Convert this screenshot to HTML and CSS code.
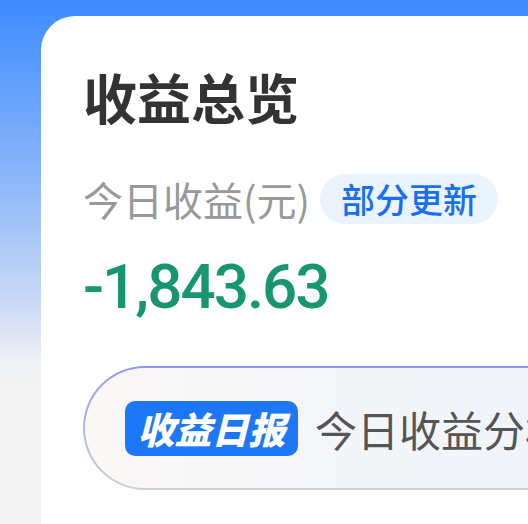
FILE: index.html
```html
<!DOCTYPE html>
<html lang="zh-CN">
<head>
<meta charset="utf-8">
<link rel="stylesheet" href="styles.css">
</head>
<body>
<div class="page">
  <div class="card">
    <h1 class="title">收益总览</h1>
    <div class="label-row">
      <span class="label">今日收益(元)</span>
      <span class="tag">部分更新</span>
    </div>
    <div class="amount">-1,843.63</div>
    <div class="banner">
      <span class="badge">收益日报</span>
      <span class="banner-text">今日收益分析已生成</span>
    </div>
  </div>
</div>
</body>
</html>
```
FILE: styles.css
```css
html, body {
  margin: 0;
  padding: 0;
  width: 528px;
  height: 524px;
  overflow: hidden;
}
body {
  background: linear-gradient(to bottom, #3d8bff 0px, #8cb7fa 180px, #c8d9f6 300px, #eef0f5 360px, #f4f4f4 390px, #f4f4f4 100%);
  font-family: "Noto Sans CJK SC", "Noto Sans", sans-serif;
}
.page {
  padding: 16px 0 0 41px;
  height: 508px;
}
.card {
  background: #fff;
  border-top-left-radius: 34px;
  height: 100%;
  padding: 46px 0 0 42px;
  box-sizing: border-box;
  width: 720px;
}
.title {
  margin: 0;
  font-size: 54px;
  line-height: 70px;
  font-weight: 700;
  color: #333;
}
.label-row {
  display: flex;
  align-items: center;
  margin-top: 42px;
  height: 50px;
}
.label {
  font-size: 40px;
  color: #999;
  line-height: 50px;
  margin-right: 10px;
}
.tag {
  display: inline-flex;
  align-items: center;
  height: 50px;
  padding: 0 21px;
  border-radius: 25px;
  background: #ebf3fe;
  color: #1a6ff0;
  font-size: 34px;
  font-weight: 500;
  line-height: 50px;
}
.amount {
  margin-top: 31px;
  font-family: Roboto, "Noto Sans", sans-serif;
  font-weight: 500;
  font-size: 62px;
  line-height: 64px;
  letter-spacing: -2px;
  color: #17966f;
}
.banner {
  margin-top: 47px;
  height: 124px;
  box-sizing: border-box;
  border: 2px solid transparent;
  border-radius: 62px 0 0 62px;
  background:
    linear-gradient(to right, #fbf8f6 0%, #f3f5f9 40%, #edf3fb 100%) padding-box,
    linear-gradient(to bottom, #8f96f0 0%, #b4b6e6 50%, #cfcfd3 100%) border-box;
  display: flex;
  align-items: center;
  padding-left: 40px;
  white-space: nowrap;
}
.badge {
  flex-shrink: 0;
  display: inline-flex;
  align-items: center;
  justify-content: center;
  height: 55px;
  width: 173px;
  box-sizing: border-box;
  border-radius: 10px;
  background: #1e77f7;
  color: #fff;
  font-size: 37px;
  font-weight: 900;
  font-style: italic;
  letter-spacing: 0;
}
.banner-text {
  flex-shrink: 0;
  margin-left: 17px;
  font-size: 42px;
  color: #555;
}
```
